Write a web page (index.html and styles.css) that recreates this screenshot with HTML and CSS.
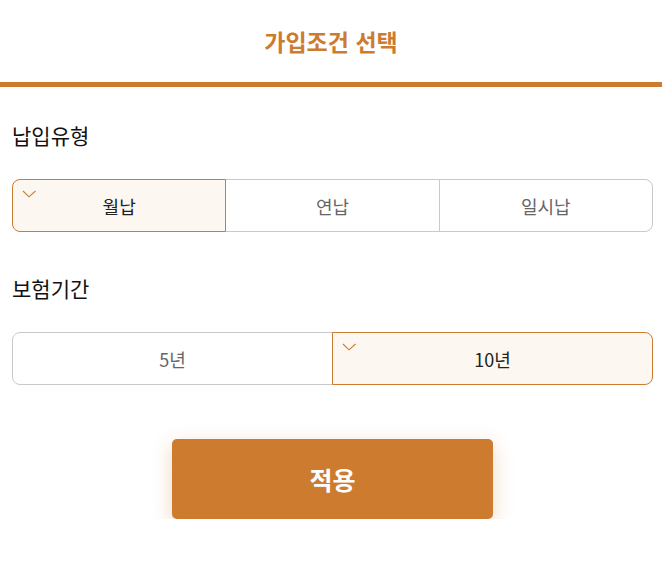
FILE: index.html
```html
<!DOCTYPE html>
<html lang="ko">
<head>
	<meta charset="utf-8">
	<title>가입조건 선택</title>
	<link rel="stylesheet" href="styles.css">
</head>
<body>
	<div class="sheet">
		<!-- header -->
		<div class="head">
			<h1 class="title">가입조건 선택</h1>
		</div>
		<div class="section">
			<h2 class="label">납입유형</h2>
			<div class="seg">
				<div class="opt on">
					<svg class="chk" width="15" height="8" viewBox="0 0 15 8"><polyline points="1,1 7,6.8 13.5,1" fill="none" stroke="#cd7b2f" stroke-width="1.1"/></svg>
					월납
				</div>
				<div class="opt">연납</div>
				<div class="opt">일시납</div>
			</div>
		</div>
		<div class="section second">
			<h2 class="label">보험기간</h2>
			<div class="seg">
				<div class="opt">5년</div>
				<div class="opt on">
					<svg class="chk" width="15" height="8" viewBox="0 0 15 8"><polyline points="1,1 7,6.8 13.5,1" fill="none" stroke="#cd7b2f" stroke-width="1.1"/></svg>
					10년
				</div>
			</div>
		</div>
		<div class="foot">
			<button class="apply">적용</button>
		</div>
	</div>
</body>
</html>
```
FILE: styles.css
```css
body {
	margin: 0;
	background: #fff;
	font-family: "Noto Sans CJK KR", "Noto Sans", sans-serif;
	color: #111;
}
.head {
	height: 82px;
	display: flex;
	align-items: center;
	justify-content: center;
	border-bottom: 5px solid #cd7b2f;
}
.title {
	margin: 0;
	font-size: 23px;
	font-weight: 700;
	color: #cd7b2f;
}
.section {
	padding: 0 9px 0 12px;
}
.second {
	padding-top: 8px;
}
.label {
	margin: 0;
	padding-top: 33px;
	height: 59px;
	font-size: 21px;
	font-weight: 400;
	line-height: 30px;
}
.seg {
	display: flex;
	height: 53px;
}
.opt {
	position: relative;
	flex: 1;
	display: flex;
	align-items: center;
	justify-content: center;
	border: 1px solid #c9c9c9;
	margin-left: -1px;
	font-size: 18px;
	color: #666;
	background: #fff;
}
.opt:first-child {
	margin-left: 0;
	border-radius: 8px 0 0 8px;
}
.opt:last-child {
	border-radius: 0 8px 8px 0;
}
.opt.on {
	z-index: 1;
	border-color: #cd7b2f;
	background: #fcf7f1;
	color: #222;
}
/* check mark */
.chk {
	position: absolute;
	left: 9px;
	top: 10px;
}
.foot {
	display: flex;
	justify-content: center;
	padding: 54px 0 0 3px;
}
.apply {
	width: 321px;
	height: 80px;
	border: none;
	border-radius: 5px;
	background: #cd7b2f;
	color: #fff;
	font-family: "Noto Sans CJK KR", sans-serif;
	font-size: 25px;
	font-weight: 700;
	box-shadow: 0 6px 20px rgba(205, 123, 47, 0.3);
}
```
